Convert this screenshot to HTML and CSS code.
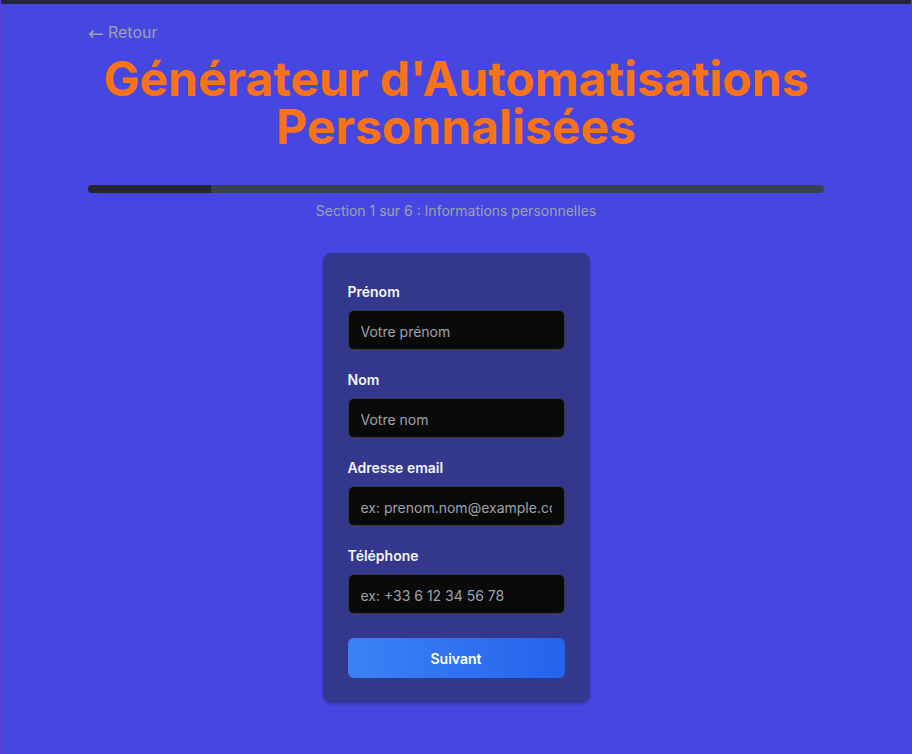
FILE: index.html
```html
<!DOCTYPE html>
<html lang="fr">
<head>
<meta charset="utf-8">
<title>Générateur d'Automatisations Personnalisées</title>
<link rel="stylesheet" href="styles.css">
</head>
<body>
<div class="topbar"></div>
<main class="container">
  <a class="back" href="#"><span class="arrow">←</span> Retour</a>
  <h1 class="title">Générateur d'Automatisations Personnalisées</h1>
  <div class="progress"><div class="progress-fill" style="width: 16.6667%"></div></div>
  <p class="step">Section 1 sur 6 : Informations personnelles</p>
  <form class="card">
    <div class="field">
      <label class="label">Prénom</label>
      <input class="input" type="text" placeholder="Votre prénom">
    </div>
    <div class="field">
      <label class="label">Nom</label>
      <input class="input" type="text" placeholder="Votre nom">
    </div>
    <div class="field">
      <label class="label">Adresse email</label>
      <input class="input" type="email" placeholder="ex: prenom.nom@example.com">
    </div>
    <div class="field">
      <label class="label">Téléphone</label>
      <input class="input" type="tel" placeholder="ex: +33 6 12 34 56 78">
    </div>
    <button class="btn" type="button">Suivant</button>
  </form>
</main>
</body>
</html>
```

FILE: styles.css
```css
* { box-sizing: border-box; }
html, body { margin: 0; padding: 0; }
body {
  background: #4547e0;
  font-family: Inter, "Noto Sans", sans-serif;
  min-height: 754px;
  border-left: 1px solid #5a3fd0;
  border-right: 1px solid #5a3fd0;
}
.topbar { height: 4px; background: #22273a; }
.container {
  max-width: 768px;
  margin: 0 auto;
  padding: 16px 16px 40px;
  display: flex;
  flex-direction: column;
}
.back {
  align-self: flex-start;
  display: flex;
  align-items: center;
  gap: 4px;
  height: 24px;
  color: #9ca3af;
  font-size: 16px;
  line-height: 24px;
  text-decoration: none;
}
.arrow {
  font-family: "DejaVu Sans", sans-serif;
  font-size: 19px;
  line-height: 1;
  margin-top: 2px;
}
.title {
  margin: 11px 0 34px;
  font-size: 48px;
  line-height: 48px;
  font-weight: 700;
  text-align: center;
  color: #f97316;
}
.progress {
  height: 8px;
  border-radius: 4px;
  background: #374151;
  overflow: hidden;
}
.progress-fill { height: 100%; background: #23262f; }
.step {
  margin: 8px 0 32px;
  text-align: center;
  font-size: 14px;
  line-height: 20px;
  color: #9ca3af;
}
.card {
  align-self: center;
  width: 267px;
  background: #34388c;
  border: 1px solid #34388c;
  border-radius: 8px;
  padding: 28px 24px 23px;
  box-shadow: 0 2px 3px rgba(0,0,0,0.25);
  display: flex;
  flex-direction: column;
  gap: 20px;
}
.field { display: flex; flex-direction: column; gap: 8px; }
.label {
  color: #f3f4f6;
  font-size: 14px;
  line-height: 20px;
  font-weight: 600;
}
.input {
  width: 100%;
  height: 40px;
  background: #0a0a0b;
  border: 1px solid #3a3a44;
  border-radius: 6px;
  padding: 2px 12px 0;
  font-family: inherit;
  font-size: 14px;
  color: #e5e7eb;
  outline: none;
}
.input::placeholder { color: #9ca3af; }
.btn {
  margin-top: 4px;
  height: 40px;
  border: none;
  border-radius: 6px;
  background: linear-gradient(90deg, #3b82f6, #2563eb);
  color: #ffffff;
  font-family: inherit;
  font-size: 14px;
  font-weight: 600;
  cursor: pointer;
}
```
